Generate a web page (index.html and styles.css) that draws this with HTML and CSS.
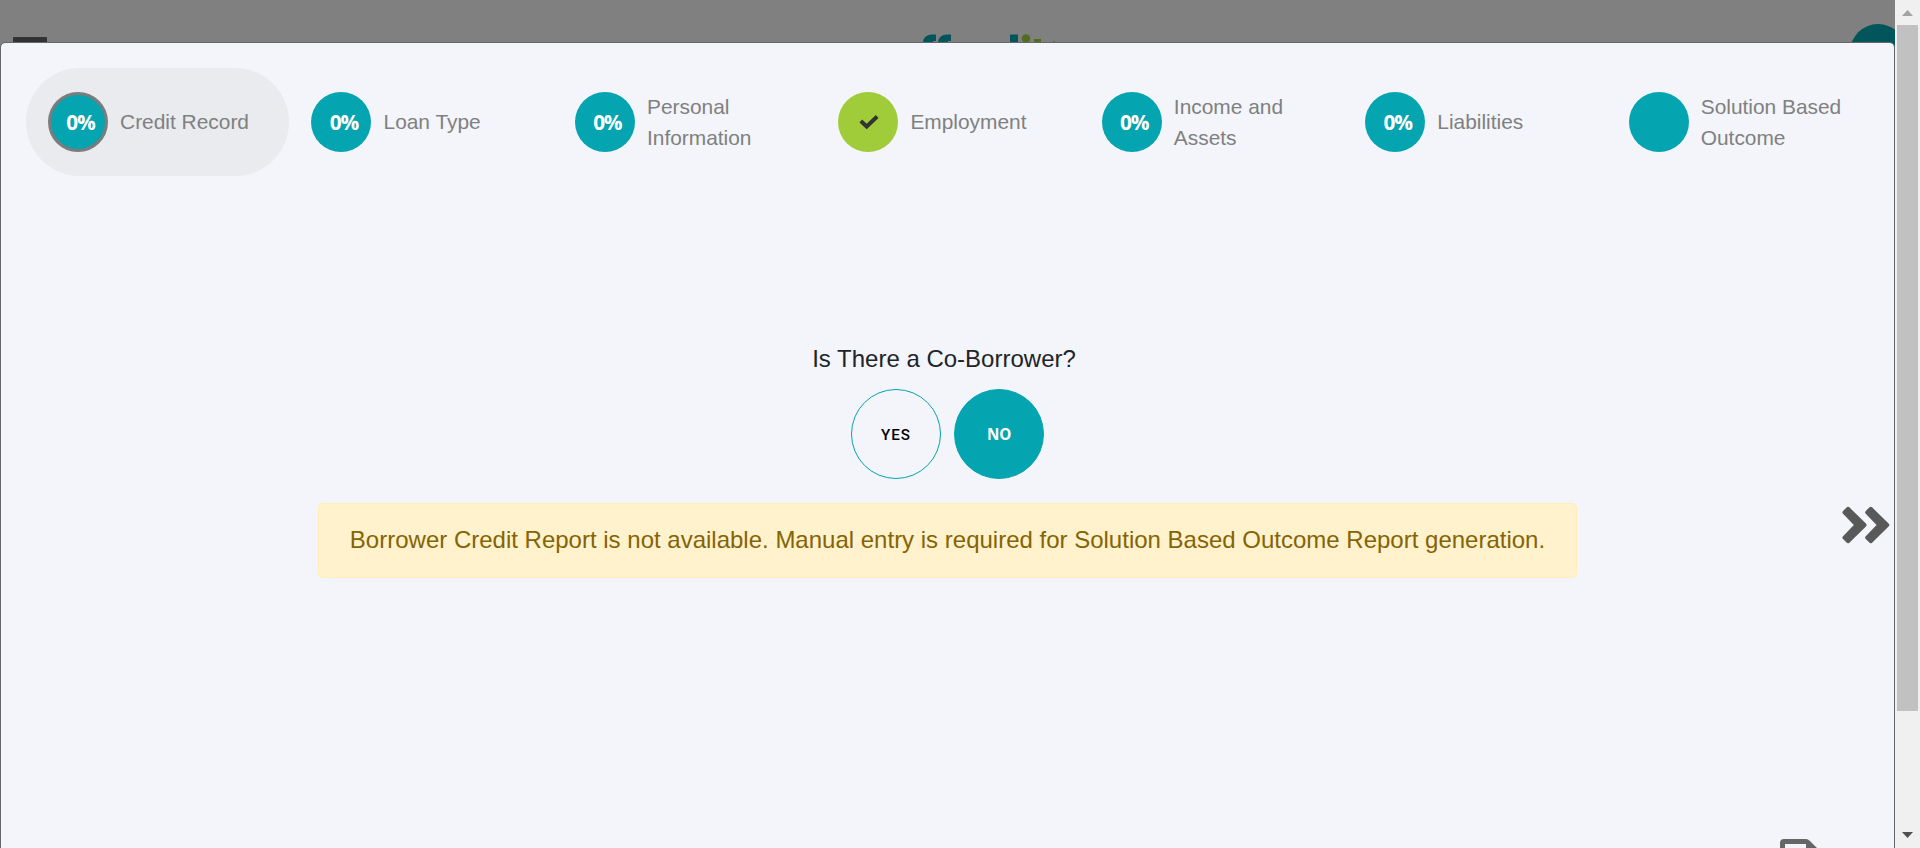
FILE: index.html
```
<!DOCTYPE html>
<html lang="en">
<head>
<meta charset="utf-8">
<title>Loan application</title>
<link rel="stylesheet" href="styles.css">
</head>
<body>
<div class="app">
  <div class="page">
    <svg class="backdrop" viewBox="0 0 1895 80" aria-hidden="true">
      <rect x="13" y="37" width="34" height="9" rx="1" fill="#333"/>
      <g fill="#02565b">
        <path d="M923 46V42Q924 34.500 932 34.500H936V41H934Q932 41 931.500 46Z"/>
        <path d="M938 46V42Q939 34.500 947 34.500H951V41H949Q947 41 946.500 46Z"/>
        <path d="M1010 34.500H1018V46H1010Z"/>
        <circle cx="1054" cy="44" r="2.500"/>
        <circle cx="1878" cy="52" r="28"/>
      </g>
      <g fill="#536d20"><circle cx="1026" cy="38.500" r="4.300"/><path d="M1034 39H1041V46H1034Z"/></g>
    </svg>
    <main class="modal">
      <nav class="steps">
        <div class="step active"><span class="badge">0%</span><span class="label">Credit Record</span></div>
        <div class="step"><span class="badge">0%</span><span class="label">Loan Type</span></div>
        <div class="step"><span class="badge">0%</span><span class="label">Personal Information</span></div>
        <div class="step"><span class="badge done"><svg width="20" height="15" viewBox="0 0 20 15"><path d="M1.800 6L7.700 11.500L18.200 1.500" fill="none" stroke="#333" stroke-width="3.900"/></svg></span><span class="label">Employment</span></div>
        <div class="step"><span class="badge">0%</span><span class="label">Income and Assets</span></div>
        <div class="step"><span class="badge">0%</span><span class="label">Liabilities</span></div>
        <div class="step"><span class="badge"></span><span class="label">Solution Based Outcome</span></div>
      </nav>
      <section class="question">
        <h1 class="title">Is There a Co-Borrower?</h1>
        <div class="choices">
          <button class="choice">YES</button>
          <button class="choice selected">NO</button>
        </div>
        <div class="alert">Borrower Credit Report is not available. Manual entry is required for Solution Based Outcome Report generation.</div>
      </section>
      <svg class="next" width="48" height="38" viewBox="0 0 48 38" fill="#595959" stroke="#595959" stroke-width="4" stroke-linejoin="round"><path d="M6 2.800L22.500 19L6 35.200L2.500 31.700L14.500 19L2.500 6.300ZM28.700 2.800L45.200 19L28.700 35.200L25.200 31.700L37.200 19L25.200 6.300Z"/></svg>
      <svg class="save" width="44" height="44" viewBox="0 0 44 44"><path fill="#666" fill-rule="evenodd" d="M4 0H26Q28 0 30 2L42 14V40Q42 44 38 44H4Q0 44 0 40V4Q0 0 4 0ZM5 5V16H26V5Z"/></svg>
    </main>
  </div>
  <div class="scrollbar">
    <svg width="11" height="6" viewBox="0 0 11 6"><path d="M5.500 0L11 6H0Z" fill="#a3a3a3"/></svg>
    <div class="thumb"></div>
    <svg class="down" width="11" height="6" viewBox="0 0 11 6"><path d="M0 0H11L5.500 6Z" fill="#505050"/></svg>
  </div>
</div>
</body>
</html>
```
FILE: styles.css
```
* { box-sizing: border-box; }
body { margin: 0; overflow: hidden; font-family: "Liberation Sans", Arial, sans-serif; }
.app { display: flex; height: 848px; overflow: hidden; }
.page { position: relative; width: 1895px; padding-top: 42px; background: #808080; }
.backdrop { position: absolute; left: 0; top: 0; width: 1895px; height: 80px; }
.modal { position: relative; height: 900px; padding: 25px; background: #f3f5fa; background-clip: padding-box; border: 1px solid #66676a; border-radius: 5px; }
.steps { display: grid; grid-template-columns: repeat(7, 263.45px); height: 108px; }
.step { display: flex; align-items: center; gap: 12.2px; padding: 0 21.9px; border-radius: 54px; }
.step.active { background: #e9ebee; }
.badge { display: flex; flex: none; align-items: center; justify-content: center; width: 60px; height: 60px; padding: 0 0 1px 5px; border-radius: 50%; background: #04a4b0; color: #fff; font: bold 20.8px "Open Sans", sans-serif; letter-spacing: -1.2px; }
.active .badge { border: 3px solid #7c7c7c; }
.badge.done { background: #a0cc3a; padding: 0 0 0 1px; }
.label { color: #808080; font-size: 20.9px; line-height: 31.2px; }
.question { display: flex; flex-direction: column; align-items: center; padding-top: 168px; }
.title { margin: 0 7px 0 0; color: #212529; font-size: 24px; font-weight: 400; line-height: 30px; }
.choices { display: flex; gap: 13px; margin-top: 15px; }
.choice { width: 90px; height: 90px; padding: 2px 0 0; border: 1px solid #04a4b0; border-radius: 50%; background: transparent; color: #000; font: 500 15.2px Roboto, sans-serif; letter-spacing: 1px; }
.choice.selected { padding-top: 0; background: #04a4b0; color: #fff; font: 700 15.2px "Open Sans", sans-serif; letter-spacing: -0.3px; }
.alert { width: 1259px; height: 75px; margin-top: 24px; border: 1px solid #ffeeba; border-radius: 5px; background: #fff2cd; color: #856404; font-size: 24px; line-height: 71px; text-align: center; white-space: nowrap; }
.next { position: absolute; left: 1841px; top: 463px; }
.save { position: absolute; left: 1779px; top: 796px; }
.scrollbar { display: flex; flex-direction: column; align-items: center; width: 25px; padding: 10px 0; background: #f0f0f0; }
.thumb { width: 21px; height: 686px; margin-top: 9px; background: #c1c1c1; }
.down { margin-top: auto; }
```
